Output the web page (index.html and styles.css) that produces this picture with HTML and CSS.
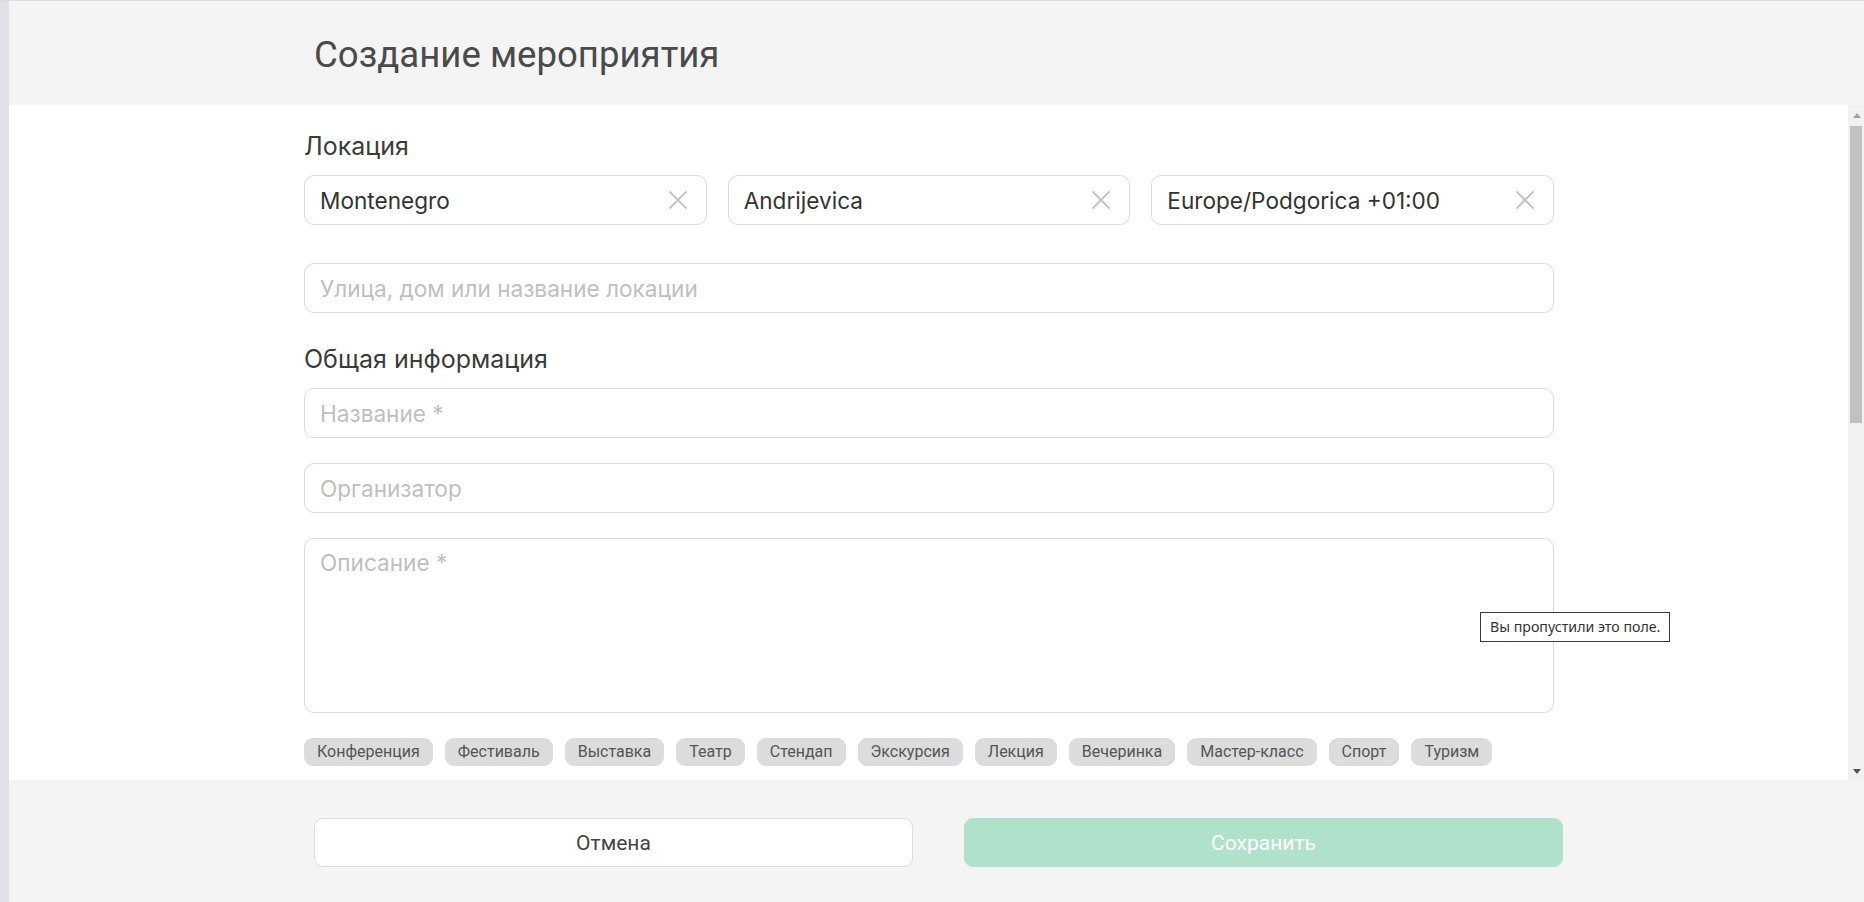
FILE: index.html
```html
<!DOCTYPE html>
<html lang="ru">
<head>
<meta charset="utf-8">
<title>Создание мероприятия</title>
<link rel="stylesheet" href="styles.css">
</head>
<body>
<div class="app">
  <div class="strip"></div>
  <div class="main">
    <header class="head">
      <h1 class="title">Создание мероприятия</h1>
    </header>
    <div class="body">
      <div class="scroll">
        <div class="form">
          <h2 class="label">Локация</h2>
          <div class="row3">
            <div class="field"><span class="val">Montenegro</span><svg class="x" viewBox="0 0 20 20"><path d="M1.5 1.5L18.5 18.5M18.5 1.5L1.5 18.5"/></svg></div>
            <div class="field"><span class="val">Andrijevica</span><svg class="x" viewBox="0 0 20 20"><path d="M1.5 1.5L18.5 18.5M18.5 1.5L1.5 18.5"/></svg></div>
            <div class="field"><span class="val">Europe/Podgorica +01:00</span><svg class="x" viewBox="0 0 20 20"><path d="M1.5 1.5L18.5 18.5M18.5 1.5L1.5 18.5"/></svg></div>
          </div>
          <div class="field street"><span class="ph">Улица, дом или название локации</span></div>
          <h2 class="label label-gap">Общая информация</h2>
          <div class="field"><span class="ph">Название *</span></div>
          <div class="field gap25"><span class="ph">Организатор</span></div>
          <div class="field area gap25"><span class="ph">Описание *</span></div>
          <div class="chips">
            <span class="chip">Конференция</span>
            <span class="chip">Фестиваль</span>
            <span class="chip">Выставка</span>
            <span class="chip">Театр</span>
            <span class="chip">Стендап</span>
            <span class="chip">Экскурсия</span>
            <span class="chip">Лекция</span>
            <span class="chip">Вечеринка</span>
            <span class="chip">Мастер-класс</span>
            <span class="chip">Спорт</span>
            <span class="chip">Туризм</span>
          </div>
        </div>
        <div class="tooltip">Вы пропустили это поле.</div>
      </div>
      <div class="scrollbar">
        <div class="sb-btn"><span class="arr-up"></span></div>
        <div class="sb-track"><div class="sb-thumb"></div></div>
        <div class="sb-btn"><span class="arr-down"></span></div>
      </div>
    </div>
    <footer class="foot">
      <button class="btn btn-cancel">Отмена</button>
      <button class="btn btn-save">Сохранить</button>
    </footer>
  </div>
</div>
</body>
</html>
```
FILE: styles.css
```css
* { box-sizing: border-box; }
html, body { margin: 0; padding: 0; }
body {
  width: 1864px;
  height: 902px;
  overflow: hidden;
  background: #ffffff;
  font-family: "Inter", "Noto Sans", sans-serif;
}
.app {
  display: flex;
  height: 902px;
  border-top: 1px solid #dcdcdc;
}
.strip {
  width: 9px;
  flex: none;
  background: #dee2e7;
}
.main {
  flex: 1;
  display: flex;
  flex-direction: column;
  min-width: 0;
}
.head {
  height: 104px;
  flex: none;
  background: #f4f4f4;
  display: flex;
  align-items: center;
  padding-left: 305px;
}
.title {
  margin: 0;
  font-family: "Roboto", sans-serif;
  font-weight: 400;
  font-size: 36.6px;
  line-height: 40px;
  color: #4a4a4a;
  padding-top: 3px;
}
.body {
  height: 675px;
  flex: none;
  display: flex;
  position: relative;
}
.scroll {
  flex: 1;
  overflow: hidden;
  background: #fff;
}
.form {
  width: 1250px;
  margin-left: 295px;
  padding-top: 28px;
}
.label {
  margin: 0 0 16px 0;
  font-weight: 400;
  font-size: 25px;
  line-height: 26px;
  color: #3b3b3b;
}
.label-gap { margin-top: 33px; }
.row3 {
  display: grid;
  grid-template-columns: 1fr 1fr 1fr;
  column-gap: 21px;
}
.field {
  height: 50px;
  border: 1px solid #dcdcdc;
  border-radius: 10px;
  display: flex;
  align-items: center;
  justify-content: space-between;
  padding: 1px 18px 0 15px;
  font-size: 22.6px;
  line-height: 26px;
  background: #fff;
}
.val { color: #333333; }
.ph { color: #bfbfbf; }
.x {
  width: 20px;
  height: 20px;
  fill: none;
  stroke: #c4c4c4;
  stroke-width: 2;
  flex: none;
  margin-top: -1px;
}
.street { margin-top: 38px; }
.gap25 { margin-top: 25px; }
.area {
  height: 175px;
  align-items: flex-start;
  padding-top: 11px;
}
.chips {
  margin-top: 25px;
  display: flex;
  gap: 12px;
}
.chip {
  height: 28px;
  padding: 0 13px;
  border-radius: 9px;
  background: #dcdcdc;
  color: #555555;
  font-family: "Roboto", sans-serif;
  font-size: 16px;
  line-height: 28px;
  white-space: nowrap;
}
.tooltip {
  position: absolute;
  left: 1471px;
  top: 507px;
  height: 30px;
  padding: 0 9px 0 9px;
  border: 1px solid #3a3a3a;
  background: #fff;
  color: #333;
  font-family: "Noto Sans", sans-serif;
  font-size: 14.2px;
  line-height: 28px;
  white-space: nowrap;
}
.scrollbar {
  width: 16px;
  flex: none;
  background: #f1f1f1;
  display: flex;
  flex-direction: column;
}
.sb-btn {
  height: 17px;
  flex: none;
  display: flex;
  align-items: center;
  justify-content: center;
}
.arr-up {
  width: 0; height: 0;
  border-left: 4px solid transparent;
  border-right: 4px solid transparent;
  border-bottom: 5px solid #a3a3a3;
  margin-left: 2px;
  margin-top: 4px;
}
.arr-down {
  width: 0; height: 0;
  border-left: 4px solid transparent;
  border-right: 4px solid transparent;
  border-top: 5px solid #505050;
  margin-left: 2px;
}
.sb-track {
  flex: 1;
  padding: 4px 0 0 2px;
}
.sb-thumb {
  width: 12px;
  height: 297px;
  background: #c1c1c1;
}
.foot {
  height: 122px;
  flex: none;
  background: #f4f4f4;
  display: flex;
  gap: 51px;
  padding: 38px 0 0 305px;
}
.btn {
  width: 599px;
  height: 49px;
  border-radius: 9px;
  font-family: "Roboto", sans-serif;
  font-size: 21px;
  cursor: pointer;
}
.btn-cancel {
  background: #fff;
  border: 1px solid #dcdcdc;
  color: #444;
}
.btn-save {
  background: #b0e2cb;
  border: 1px solid #b0e2cb;
  color: #fff;
}
```
